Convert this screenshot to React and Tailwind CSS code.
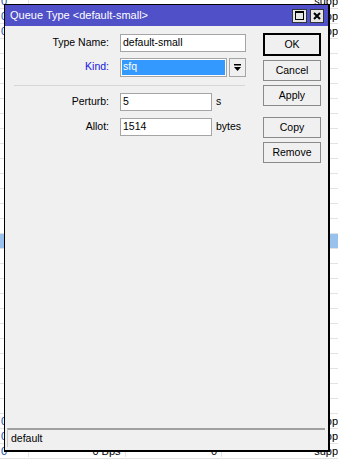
import React from 'react'

const rows = Array.from({ length: 31 }, (_, i) => i)

function BackgroundTable() {
  return (
    <div className="h-[459px] w-full overflow-hidden bg-white">
      <div className="-mt-[6px]">
        {rows.map((i) => {
          const shown = i < 3 || i > 27
          return (
            <div
              key={i}
              className={`flex h-[15px] items-center border-b border-[#e3e3e3] text-[11px] leading-none ${i === 16 ? 'bg-[#99c1ee]' : ''}`}
            >
              <div className="w-[30px] border-r border-[#e3e3e3] pl-[1px] text-[#1a4fa8]">{shown ? '0' : ''}</div>
              <div className="w-[100px] border-r border-[#e3e3e3] pr-1 text-right">{i === 30 ? '0 Bps' : ''}</div>
              <div className="w-[100px] border-r border-[#e3e3e3] pr-1 text-right">{i === 30 ? '0' : ''}</div>
              <div className="flex-1 pl-[92px] text-black">{shown ? 'supp' : ''}</div>
            </div>
          )
        })}
      </div>
    </div>
  )
}

function Field({ label, blue, children }) {
  return (
    <div className="flex h-[18px] items-center">
      <div className={`w-[105px] pr-[1px] text-right ${blue ? 'text-[#1515e0]' : 'text-black'}`}>{label}</div>
      <div className="ml-[10px] flex h-full items-center">{children}</div>
    </div>
  )
}

function Btn({ children, primary }) {
  return (
    <button
      className={`flex w-[58px] items-center justify-center bg-[#f0f0f0] text-black ${primary ? 'h-[23px] border-2 border-black' : 'h-[21px] border border-[#8a8a8a]'}`}
    >
      {children}
    </button>
  )
}

export default function App() {
  return (
    <div
      className="relative h-[459px] w-[338px] overflow-hidden text-[10.5px]"
      style={{ fontFamily: '"Liberation Sans", Arial, sans-serif' }}
    >
      <BackgroundTable />

      {/* dialog window */}
      <div className="absolute left-[4px] top-[4px] flex h-[448px] w-[326px] flex-col border border-r-2 border-b-2 border-black bg-[#f0f0f0]">
        <div className="flex h-[21px] items-center bg-[#5050c8] pl-[5px] pr-[4px] text-[11px] text-white">
          <span className="flex-1">Queue Type &lt;default-small&gt;</span>
          <div className="flex h-[14px] w-[15px] items-center justify-center border border-[#333] bg-[#e6e6e6]">
            <div className="h-[9px] w-[9px] border border-t-2 border-black" />
          </div>
          <div className="ml-[3px] flex h-[14px] w-[14px] items-center justify-center border border-[#333] bg-[#e6e6e6]">
            <svg width="8" height="8" viewBox="0 0 8 8">
              <path d="M1 1 L7 7 M7 1 L1 7" stroke="black" strokeWidth="2" />
            </svg>
          </div>
        </div>

        <div className="flex flex-1 pt-[7px]">
          <div className="flex flex-1 flex-col pt-[1px]">
            <Field label="Type Name:">
              <div className="flex h-[18px] w-[126px] items-center border border-[#a5a5a5] bg-white pl-[2px]">default-small</div>
            </Field>
            <div className="mt-[6px]">
              <Field label="Kind:" blue>
                <div className="flex h-[19px] w-[107px] items-center border border-[#a5a5a5] bg-white p-[1px]">
                  <div className="flex h-full w-full items-center bg-[#3399ff] pl-[1px] text-white">sfq</div>
                </div>
                <div className="ml-[2px] flex h-[19px] w-[17px] items-center justify-center border border-[#a5a5a5] bg-[#f0f0f0]">
                  <svg width="9" height="9" viewBox="0 0 9 9">
                    <rect x="1" y="1" width="7" height="1.5" fill="black" />
                    <path d="M1 4 H8 L4.5 8 Z" fill="black" />
                  </svg>
                </div>
              </Field>
            </div>
            <div className="ml-[9px] mr-[10px] mt-[9px] h-[1px] w-[231px] bg-[#d7d7d7]" />
            <div className="mt-[7px]">
              <Field label="Perturb:">
                <div className="flex h-[18px] w-[92px] items-center border border-[#a5a5a5] bg-white pl-[2px]">5</div>
                <span className="ml-[4px]">s</span>
              </Field>
            </div>
            <div className="mt-[7px]">
              <Field label="Allot:">
                <div className="flex h-[18px] w-[92px] items-center border border-[#a5a5a5] bg-white pl-[2px]">1514</div>
                <span className="ml-[4px]">bytes</span>
              </Field>
            </div>
          </div>

          <div className="mr-[7px] flex flex-col">
            <Btn primary>OK</Btn>
            <div className="mt-[4px] flex flex-col gap-[4px]">
              <Btn>Cancel</Btn>
              <Btn>Apply</Btn>
            </div>
            <div className="mt-[11px] flex flex-col gap-[4px]">
              <Btn>Copy</Btn>
              <Btn>Remove</Btn>
            </div>
          </div>
        </div>

        <div className="mb-[3px] ml-[2px] mr-[3px] flex h-[19px] items-center border-l border-t-2 border-[#a0a0a0] border-l-[#c8c8c8] pl-[3px] text-black">
          default
        </div>
      </div>
    </div>
  )
}
